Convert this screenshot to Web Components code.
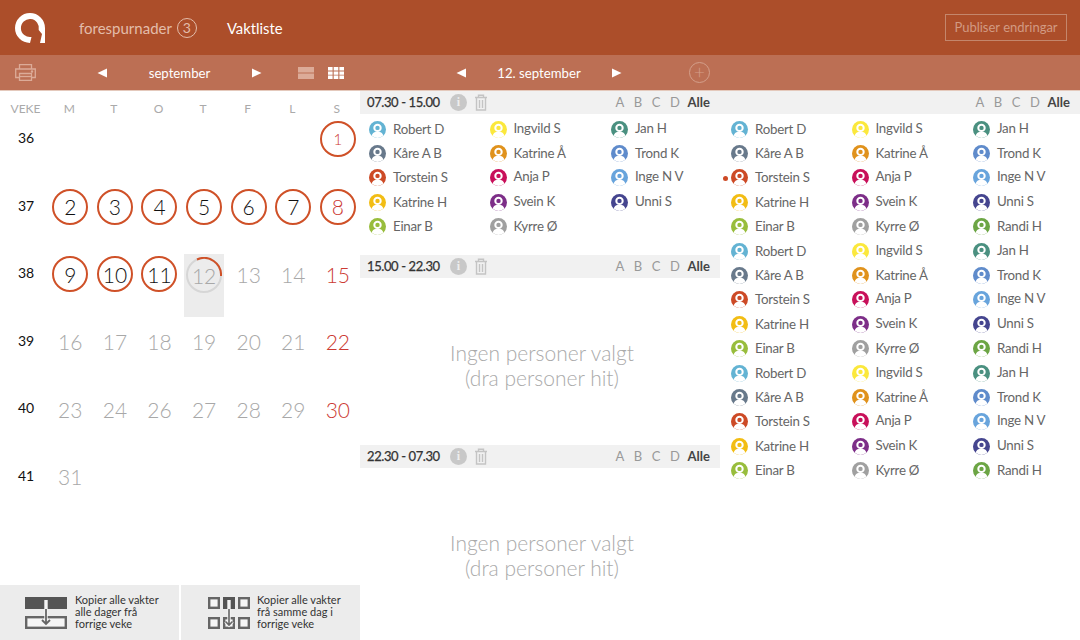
<!DOCTYPE html>
<html>
<head>
<meta charset="utf-8">
<title>Vaktliste</title>
<style>
  html, body { margin: 0; padding: 0; background: #fff; }
  body { width: 1080px; height: 640px; overflow: hidden; font-family: Lato, "Liberation Sans", sans-serif; }
</style>
</head>
<body>
<vakt-app></vakt-app>
<script>
const COLOURS = {
  'Robert D': '#63b3d3', 'Kåre A B': '#68798b', 'Torstein S': '#cd4a26', 'Katrine H': '#f2bd14', 'Einar B': '#98bd3c',
  'Ingvild S': '#fbe83c', 'Katrine Å': '#e0921c', 'Anja P': '#c8105a', 'Svein K': '#7d2e88', 'Kyrre Ø': '#a0a0a0',
  'Jan H': '#4a9080', 'Trond K': '#5f8bcb', 'Inge N V': '#68a4dc', 'Unni S': '#45458f', 'Randi H': '#6ca544'
};

// how far each name sits above its icon, it is not the same on every row
const LIFT = { 'Ingvild S': 3, 'Jan H': 3, 'Torstein S': 2, 'Anja P': 3, 'Inge N V': 3, 'Svein K': 2, 'Unni S': 2,
  'Kåre A B': 1, 'Katrine Å': 1, 'Trond K': 1, 'Einar B': 1, 'Kyrre Ø': 1, 'Randi H': 1 };

class VaktPerson extends HTMLElement {
  connectedCallback() {
    const name = this.getAttribute('name');
    const c = COLOURS[name];
    const lift = LIFT[name] || 0;
    this.attachShadow({ mode: 'open' }).innerHTML = `
      <style>
        :host { display: flex; align-items: center; height: 24.4px; position: relative; }
        svg { flex: none; width: 17px; height: 17px; margin-right: 7px; }
        span { font-size: 13.3px; letter-spacing: -.25px; color: #666; padding-bottom: ${lift}px; white-space: nowrap; }
        i { position: absolute; left: -8px; top: 10px; width: 5px; height: 5px; border-radius: 50%; background: #cd4a26; }
      </style>
      ${this.hasAttribute('flag') ? '<i></i>' : ''}
      <svg viewBox="0 0 17 17">
        <circle cx="8.5" cy="8.5" r="8.5" fill="${c}"/>
        <circle cx="8.5" cy="6.9" r="3.2" fill="none" stroke="#fff" stroke-width="2"/>
        <path d="M2.6 14.6C3.2 12.4 5 11.2 6.4 11L10.6 11C12 11.2 13.8 12.4 14.4 14.6A8.5 8.5 0 0 1 2.6 14.6Z" fill="#fff"/>
      </svg>
      <span>${name}</span>`;
  }
}
customElements.define('vakt-person', VaktPerson);

class VaktGroups extends HTMLElement {
  constructor() {
    super();
    this.attachShadow({ mode: 'open' }).innerHTML = `
      <style>
        :host { display: flex; align-items: center; gap: 9.6px; font-size: 13px; color: #999; }
        b { color: #444; font-weight: 700; margin-left: -2px; }
      </style>
      <span>A</span><span>B</span><span>C</span><span>D</span><b>Alle</b>`;
  }
}
customElements.define('vakt-groups', VaktGroups);

class VaktShift extends HTMLElement {
  connectedCallback() {
    const time = this.getAttribute('time');
    this.attachShadow({ mode: 'open' }).innerHTML = `
      <style>
        :host { display: block; }
        .head { height: 23px; box-sizing: border-box; background: #f1f1f1; display: flex; align-items: center; padding: 0 10px 1px 7px; }
        .time { font-size: 13px; letter-spacing: -.4px; color: #333; width: 83px; white-space: nowrap; -webkit-text-stroke: .25px #333; }
        .info { width: 17px; height: 17px; border-radius: 50%; background: #c8c8c8; color: #eee; font: 700 12px/17px "Liberation Serif", serif; text-align: center; margin-right: 7px; }
        svg { width: 14px; height: 17px; }
        vakt-groups { margin-left: auto; }
        .body { display: block; }
      </style>
      <div class="head">
        ${time ? `<span class="time">${time}</span><span class="info">i</span>
        <svg viewBox="0 0 14 17" fill="none" stroke="#c4c4c4" stroke-width="1.4"><path d="M1 3.5H13M4.5 3V1.2H9.5V3M2.5 3.5V16H11.5V3.5M5.5 6V14M8.5 6V14"/></svg>` : ''}
        <vakt-groups></vakt-groups>
      </div>
      <div class="body"><slot></slot></div>`;
  }
}
customElements.define('vakt-shift', VaktShift);

class VaktPeople extends HTMLElement {
  connectedCallback() {
    const cols = this.getAttribute('cols').split('|').map(c => c.split(','));
    const pad = this.getAttribute('pad') || 9;
    this.attachShadow({ mode: 'open' }).innerHTML = `
      <style>
        :host { display: grid; grid-template-columns: 120.5px 121.5px 1fr; padding: 3px 0 0 ${pad}px; }
        div { display: flex; flex-direction: column; }
      </style>
      ${cols.map(c => '<div>' + c.map(n => {
        const flag = n.startsWith('!');
        return `<vakt-person name="${n.replace('!', '')}"${flag ? ' flag' : ''}></vakt-person>`;
      }).join('') + '</div>').join('')}`;
  }
}
customElements.define('vakt-people', VaktPeople);

class VaktEmpty extends HTMLElement {
  constructor() {
    super();
    this.attachShadow({ mode: 'open' }).innerHTML = `
      <style>
        :host { display: flex; align-items: center; justify-content: center; text-align: center; color: #aaa; font-size: 21px; font-weight: 300; line-height: 25px; padding: 6px 0 0 4px; box-sizing: border-box; }
      </style>
      <div>Ingen personer valgt<br>(dra personer hit)</div>`;
  }
}
customElements.define('vakt-empty', VaktEmpty);

class VaktDay extends HTMLElement {
  connectedCallback() {
    const kind = this.getAttribute('kind') || '';
    const sun = this.hasAttribute('sun');
    const small = this.hasAttribute('small');
    const inner = this.textContent;
    this.attachShadow({ mode: 'open' }).innerHTML = `
      <style>
        :host { display: flex; justify-content: center; align-items: flex-start; position: relative; }
        .n { width: 36px; height: 36px; margin-top: 5px; box-sizing: border-box; border-radius: 50%; display: flex; align-items: center; justify-content: center;
             font-size: ${small ? 15 : 21}px; font-weight: 300; color: ${sun ? '#cc3a33' : '#a8a8a8'}; position: relative; }
        .on { border: 2px solid #cf5128; color: ${sun ? '#cc3a33' : '#111'}; }
        .today { background: #ececec; width: 40px; height: 63px; display: flex; align-items: flex-start; justify-content: center; margin-top: 3px; }
        .today .n { margin-top: 3px; border: 2px solid #d6d6d6; }
        svg { position: absolute; left: -2px; top: -2px; width: 36px; height: 36px; }
      </style>
      ${kind === 'today' ? `<div class="today"><div class="n">${inner}
        <svg viewBox="0 0 36 36" fill="none"><path d="M11 2.5A17 17 0 0 1 35 19" stroke="#cf5128" stroke-width="2"/></svg></div></div>`
        : `<div class="n ${kind === 'on' ? 'on' : ''}">${inner}</div>`}`;
  }
}
customElements.define('vakt-day', VaktDay);

class VaktCalendar extends HTMLElement {
  constructor() {
    super();
    const weeks = [
      [36, ['', '', '', '', '', '', 'on:1']],
      [37, ['on:2', 'on:3', 'on:4', 'on:5', 'on:6', 'on:7', 'on:8']],
      [38, ['on:9', 'on:10', 'on:11', 'today:12', ':13', ':14', ':15']],
      [39, [':16', ':17', ':18', ':19', ':20', ':21', ':22']],
      [40, [':23', ':24', ':26', ':27', ':28', ':29', ':30']],
      [41, [':31', '', '', '', '', '', '']]
    ];
    let rows = '';
    for (const [no, days] of weeks) {
      rows += `<div class="wk">${no}</div>`;
      days.forEach((d, i) => {
        if (!d) { rows += '<span></span>'; return; }
        const [kind, n] = d.split(':');
        rows += `<vakt-day kind="${kind}"${i === 6 ? ' sun' : ''}${n === '1' ? ' small' : ''}>${n}</vakt-day>`;
      });
    }
    this.attachShadow({ mode: 'open' }).innerHTML = `
      <style>
        :host { display: block; flex: 1; }
        .top { height: 25px; display: flex; align-items: flex-end; justify-content: center; font-size: 12px; color: #aaa; padding-right: 2px; }
        .hd, .grid { display: grid; grid-template-columns: 48px repeat(7, 44.6px); }
        .hd { height: 25px; }
        .hd .top:first-child { padding: 0 0 0 3px; }
        .grid { grid-auto-rows: 67.6px; }
        .wk { font-size: 14px; color: #111; text-align: center; padding: 13px 0 0 4px; }
      </style>
      <div class="hd">
        <div class="top">VEKE</div>
        ${['M', 'T', 'O', 'T', 'F', 'L', 'S'].map(d => `<div class="top">${d}</div>`).join('')}
      </div>
      <div class="grid">${rows}</div>`;
  }
}
customElements.define('vakt-calendar', VaktCalendar);

class VaktCopy extends HTMLElement {
  connectedCallback() {
    const lines = this.getAttribute('text').split('|').join('<br>');
    const pic = this.getAttribute('pic') === 'week' ? `
      <svg width="42" height="32" viewBox="0 0 42 32" fill="none">
        <rect x="1.2" y="1.2" width="9.6" height="9.6" fill="#f6f6f6" stroke="#666" stroke-width="2.4"/>
        <rect x="15" y="0" width="12" height="12" fill="#555"/>
        <rect x="31.2" y="1.2" width="9.6" height="9.6" fill="#f6f6f6" stroke="#666" stroke-width="2.4"/>
        <rect x="1.2" y="21.2" width="9.6" height="9.6" fill="#f6f6f6" stroke="#666" stroke-width="2.4"/>
        <rect x="16.2" y="21.2" width="9.6" height="9.6" fill="#f6f6f6" stroke="#666" stroke-width="2.4"/>
        <rect x="31.2" y="21.2" width="9.6" height="9.6" fill="#f6f6f6" stroke="#666" stroke-width="2.4"/>
        <path d="M21 3V28M17.5 24.5L21 28L24.5 24.5" stroke="#f4f4f4" stroke-width="3.4"/>
        <path d="M21 12V28M17.5 24.5L21 28L24.5 24.5" stroke="#666" stroke-width="1.6"/>
      </svg>` : `
      <svg width="42" height="32" viewBox="0 0 42 32" fill="none">
        <rect x="0" y="0" width="42" height="12" fill="#555"/>
        <rect x="1.2" y="20.2" width="39.6" height="10.6" fill="#f6f6f6" stroke="#666" stroke-width="2.4"/>
        <path d="M21 3V27M17 23L21 27L25 23" stroke="#f4f4f4" stroke-width="3.4"/>
        <path d="M21 12V27M17 23L21 27L25 23" stroke="#666" stroke-width="1.8"/>
      </svg>`;
    this.attachShadow({ mode: 'open' }).innerHTML = `
      <style>
        :host { display: flex; align-items: center; width: 179px; height: 55px; box-sizing: border-box; background: #ececec; color: #333; font-size: 11px; line-height: 12px; padding-left: var(--pad, 25px); }
        div { margin: -2px 0 0 var(--gap, 8px); }
      </style>
      ${pic}<div>${lines}</div>`;
  }
}
customElements.define('vakt-copy', VaktCopy);

class VaktPager extends HTMLElement {
  connectedCallback() {
    const w = this.getAttribute('width');
    this.attachShadow({ mode: 'open' }).innerHTML = `
      <style>
        :host { display: flex; align-items: center; justify-content: space-between; width: ${w}px; color: #fff; font-size: 13.2px; }
        svg { width: 10px; height: 10px; fill: #fff; }
      </style>
      <svg viewBox="0 0 10 10"><path d="M10 .5V9.5L.5 5Z"/></svg>
      <span><slot></slot></span>
      <svg viewBox="0 0 10 10"><path d="M0 .5V9.5L9.5 5Z"/></svg>`;
  }
}
customElements.define('vakt-pager', VaktPager);

class VaktTopbar extends HTMLElement {
  constructor() {
    super();
    this.attachShadow({ mode: 'open' }).innerHTML = `
      <style>
        :host { display: flex; align-items: center; height: 55px; background: #ac4e2a; padding: 0 13px 0 15px; color: #fff; }
        .logo { width: 30px; height: 30px; margin-right: 34px; }
        .req { font-size: 15px; color: #e3bdaa; }
        .badge { width: 18px; height: 18px; border: 1px solid #e3bdaa; border-radius: 50%; color: #e3bdaa; font-size: 14px; line-height: 18px; text-align: center; margin: 0 30px 0 5px; }
        .now { font-size: 14.8px; color: #fff; }
        .pub { margin-left: auto; border: 1px solid #c4866c; color: #d29a82; font-size: 13px; width: 122px; height: 27px; box-sizing: border-box; text-align: center; line-height: 25px; }
      </style>
      <svg class="logo" viewBox="0 0 30 30">
        <path d="M15 30A15 15 0 1 1 30 15V30H25L27 21L23.7 17A9 9 0 1 0 16.5 23.9Z" fill="#fff"/>
      </svg>
      <span class="req">forespurnader</span><span class="badge">3</span>
      <span class="now">Vaktliste</span>
      <span class="pub">Publiser endringar</span>`;
  }
}
customElements.define('vakt-topbar', VaktTopbar);

class VaktApp extends HTMLElement {
  constructor() {
    super();
    const A = 'Robert D,Kåre A B,Torstein S,Katrine H,Einar B';
    const B = 'Ingvild S,Katrine Å,Anja P,Svein K,Kyrre Ø';
    const C = 'Jan H,Trond K,Inge N V,Unni S,Randi H';
    const rep = s => [s, s, s].join(',').replace('Torstein S', '!Torstein S');
    this.attachShadow({ mode: 'open' }).innerHTML = `
      <style>
        :host { display: flex; flex-direction: column; width: 1080px; height: 640px; overflow: hidden; }
        .bar { height: 35px; background: #bc6f54; border-bottom: 1px solid #e4c9bc; display: flex; align-items: center; flex: none; }
        .bar .l { width: 360px; display: flex; align-items: center; padding-left: 15px; box-sizing: border-box; }
        .print { width: 21px; height: 17px; margin-right: 61px; }
        .views { display: flex; gap: 14px; margin-left: 36px; }
        .views svg { width: 16px; height: 12px; }
        .mid { display: flex; align-items: center; padding-left: 96px; }
        .plus { width: 19px; height: 19px; border: 1px solid #d49f8b; border-radius: 50%; color: #d49f8b; text-align: center; line-height: 18px; font-size: 19px; font-weight: 300; margin-left: 67px; }
        .main { display: flex; flex: 1; min-height: 0; }
        .cal { width: 360px; display: flex; flex-direction: column; flex: none; }
        .copies { display: flex; justify-content: space-between; margin-top: auto; }
        .day { width: 360px; flex: none; display: flex; flex-direction: column; }
        .all { width: 360px; flex: none; }
        .s1 { height: 164px; }
        .s2 { height: 190px; display: flex; flex-direction: column; }
        .s3 { flex: 1; }
        vakt-empty { height: 167px; }
      </style>
      <div><vakt-topbar></vakt-topbar></div>
      <div class="bar">
        <div class="l">
          <svg class="print" viewBox="0 0 21 17" fill="none" stroke="#dcab98" stroke-width="1.3">
            <path d="M4.5 5V.7H16.5V5M4.5 13.5H.7V5H20.3V13.5H16.5"/><path d="M4.5 9.5H16.5V16.4H4.5Z"/><path d="M4.5 12.5H16.5"/><circle cx="17" cy="7.5" r=".6" fill="#dcab98"/>
          </svg>
          <vakt-pager width="165">september</vakt-pager>
          <div class="views">
            <svg viewBox="0 0 16 12" fill="#dcab98"><path d="M0 0H16V5.5H0ZM0 6.5H16V12H0Z"/></svg>
            <svg viewBox="0 0 16 12" fill="#fff"><path d="M0 0H4.6V3.6H0ZM5.7 0H10.3V3.6H5.7ZM11.4 0H16V3.6H11.4ZM0 4.4H4.6V7.8H0ZM5.7 4.4H10.3V7.8H5.7ZM11.4 4.4H16V7.8H11.4ZM0 8.6H4.6V12H0ZM5.7 8.6H10.3V12H5.7ZM11.4 8.6H16V12H11.4Z"/></svg>
          </div>
        </div>
        <div class="mid">
          <vakt-pager width="166">12. september</vakt-pager>
          <span class="plus">+</span>
        </div>
      </div>
      <div class="main">
        <div class="cal">
          <vakt-calendar></vakt-calendar>
          <div class="copies">
            <vakt-copy pic="day" text="Kopier alle vakter|alle dager frå|forrige veke"></vakt-copy>
            <vakt-copy pic="week" style="--pad:27px;--gap:7px" text="Kopier alle vakter|frå samme dag i|forrige veke"></vakt-copy>
          </div>
        </div>
        <div class="day">
          <vakt-shift class="s1" time="07.30 - 15.00"><vakt-people cols="${A}|${B}|${C.replace(',Randi H', '')}"></vakt-people></vakt-shift>
          <vakt-shift class="s2" time="15.00 - 22.30"><vakt-empty></vakt-empty></vakt-shift>
          <vakt-shift class="s3" time="22.30 - 07.30"><vakt-empty></vakt-empty></vakt-shift>
        </div>
        <div class="all">
          <vakt-shift><vakt-people pad="11" cols="${rep(A)}|${rep(B)}|${rep(C)}"></vakt-people></vakt-shift>
        </div>
      </div>`;
  }
}
customElements.define('vakt-app', VaktApp);
</script>
</body>
</html>
